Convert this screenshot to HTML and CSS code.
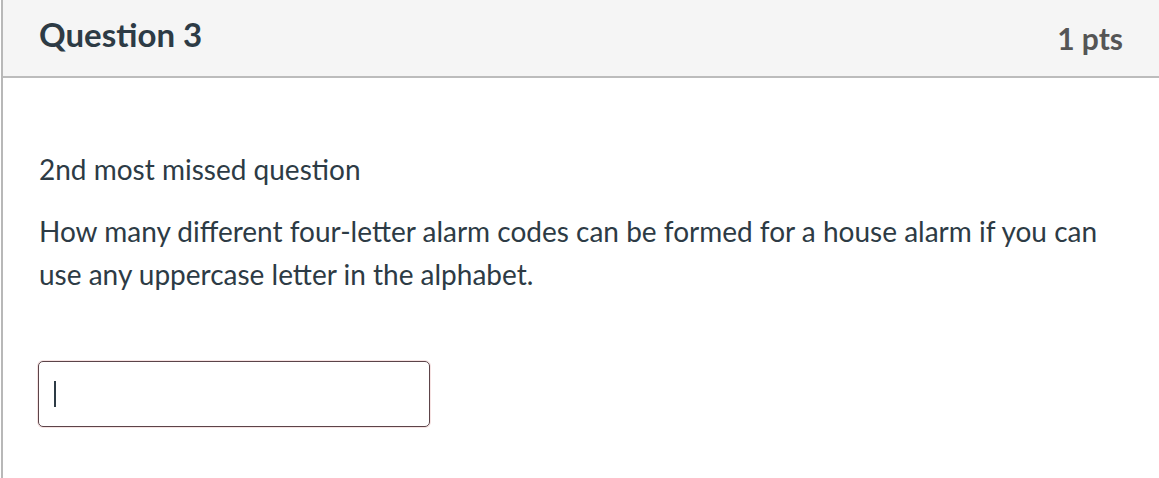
FILE: index.html
```html
<!DOCTYPE html>
<html>
<head>
<meta charset="utf-8">
<link rel="stylesheet" href="styles.css">
</head>
<body>
<div class="question">
  <div class="header">
    <h2 class="title">Question 3</h2>
    <div class="pts">1 pts</div>
  </div>
  <div class="content">
    <p class="intro">2nd most missed question</p>
    <p class="text">How many different four-letter alarm codes can be formed for a house alarm if you can use any uppercase letter in the alphabet.</p>
    <div class="answer"><span class="caret"></span></div>
  </div>
</div>
</body>
</html>
```
FILE: styles.css
```css
html, body {
  margin: 0;
  padding: 0;
  background: #fff;
  width: 1159px;
  height: 478px;
  overflow: hidden;
}
body {
  font-family: Lato, "Open Sans", sans-serif;
  color: #2d3b45;
}
.question {
  margin-left: 1px;
  border-left: 2px solid #b8b8b8;
  height: 478px;
  width: 1200px;
}
.header {
  height: 78px;
  box-sizing: border-box;
  background: #f5f5f5;
  border-bottom: 2px solid #bcbcbc;
  display: flex;
  justify-content: space-between;
  align-items: flex-start;
  padding: 0 36px 0 36px;
  width: 1156px;
}
.title {
  margin: 0;
  font-size: 33px;
  font-weight: 700;
  line-height: 36px;
  padding-top: 16px;
}
.pts {
  font-size: 30px;
  font-weight: 700;
  color: #555;
  line-height: 34px;
  padding-top: 21px;
}
.content {
  padding: 72px 36px 0 36px;
  width: 1120px;
}
.intro {
  margin: 0;
  font-size: 28px;
  line-height: 38px;
}
.text {
  margin: 22px 0 0 0;
  font-size: 28px;
  line-height: 43px;
  width: 1070px;
}
.answer {
  margin-top: 65px;
  margin-left: -1px;
  width: 390px;
  height: 64px;
  border: 1px solid #5c4449;
  border-radius: 5px;
  box-shadow: 0 0 0 1px #f7e3e3;
  box-sizing: content-box;
  position: relative;
}
.caret {
  position: absolute;
  left: 15px;
  top: 19px;
  width: 2px;
  height: 26px;
  background: #2d3b45;
}
```
